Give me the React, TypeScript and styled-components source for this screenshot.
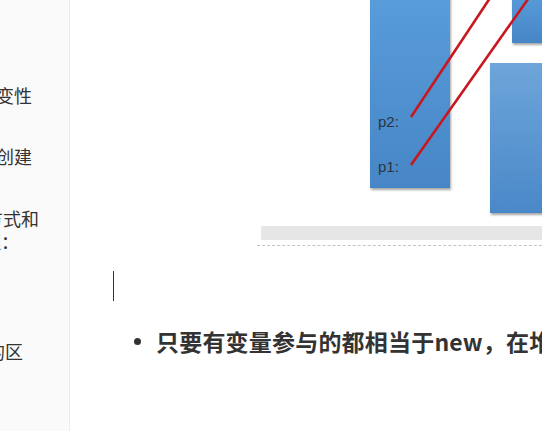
import styled, { createGlobalStyle } from 'styled-components';

const GlobalStyle = createGlobalStyle`
    html, body {
        margin: 0;
        padding: 0;
        background: #ffffff;
        overflow: hidden;
    }
    body {
        font-family: "Noto Sans CJK SC", "Noto Sans", sans-serif;
        color: #333333;
    }
`;

type lineProps = {
    $end: number,
    $top: number,
}

const Page = styled.div`
    display: flex;
    width: 542px;
    height: 431px;
    overflow: hidden;
`;

const Sidebar = styled.aside`
    width: 69px;
    flex-shrink: 0;
    background: #fafafa;
    border-right: 1px solid #ececec;
    overflow: hidden;
    display: flex;
    flex-direction: column;
`;

const OutlineLine = styled.div<lineProps>`
    display: flex;
    justify-content: flex-end;
    width: ${props => props.$end}px;
    margin-top: ${props => props.$top}px;
    height: 23px;
    line-height: 23px;
    font-size: 18px;
    color: #333333;
    white-space: nowrap;
    & span {
        flex-shrink: 0;
    }
`;

const Main = styled.main`
    flex: 1;
    display: flex;
    flex-direction: column;
    overflow: hidden;
`;

const Figure = styled.div`
    margin-left: 187px;
    width: 300px;
    border-bottom: 1px dashed #c4c4c4;
    padding-bottom: 5px;
`;

const Drawing = styled.svg`
    display: block;
`;

const ScrollTrack = styled.div`
    margin-left: 4px;
    height: 14px;
    background: #e6e6e6;
`;

const EmptyParagraph = styled.div`
    margin: 25px 0 0 43px;
    height: 30px;
    border-left: 1px solid #333333;
`;

const List = styled.ul`
    list-style: none;
    margin: 24px 0 0 0;
    padding: 0 0 0 59px;
`;

const ListItem = styled.li`
    position: relative;
    padding-left: 27px;
    font-size: 23px;
    font-weight: 700;
    line-height: 32px;
    letter-spacing: 0.2px;
    white-space: nowrap;
    color: #333333;
    &::before {
        content: '';
        position: absolute;
        left: 5px;
        top: 13px;
        width: 7px;
        height: 7px;
        border-radius: 50%;
        background: #333333;
    }
`;

const outline = [
    { text: '1. String的不可变性', end: 32, top: 84 },
    { text: '2. String对象的创建', end: 32, top: 38 },
    { text: '3. 字符串常量拼接方式和', end: 39, top: 39 },
    { text: '原理：', end: 19, top: 0 },
    { text: '4. ==和equals的区', end: 23, top: 87 },
];

function MemoryDiagram() {
    return (
        <Drawing width="300" height="226" viewBox="0 0 300 226">
            <defs>
                <linearGradient id="barBlue" x1="0" y1="0" x2="0" y2="1">
                    <stop offset="0" stopColor="#5a9ddb" />
                    <stop offset="1" stopColor="#4786c6" />
                </linearGradient>
                <linearGradient id="boxBlue" x1="0" y1="0" x2="0" y2="1">
                    <stop offset="0" stopColor="#6ea5da" />
                    <stop offset="1" stopColor="#4a88c8" />
                </linearGradient>
                <filter id="shade" x="-10%" y="-10%" width="130%" height="130%">
                    <feDropShadow dx="1" dy="2" stdDeviation="1.2" floodColor="#000" floodOpacity="0.35" />
                </filter>
            </defs>
            <rect x="113" y="-10" width="80" height="198" fill="url(#barBlue)" filter="url(#shade)" />
            <rect x="255" y="-10" width="60" height="53" fill="url(#barBlue)" filter="url(#shade)" />
            <rect x="233" y="63" width="80" height="150" fill="url(#boxBlue)" filter="url(#shade)" />
            <text x="121" y="127" fontSize="15" fill="#2a3440" fontFamily="Liberation Sans, sans-serif">p2:</text>
            <text x="121" y="172" fontSize="15" fill="#2a3440" fontFamily="Liberation Sans, sans-serif">p1:</text>
            <line x1="154" y1="117" x2="237" y2="-8" stroke="#c8171f" strokeWidth="2.6" />
            <line x1="154" y1="165" x2="276" y2="-8" stroke="#c8171f" strokeWidth="2.6" />
        </Drawing>
    );
}

export default function App() {
    return (
        <>
            <GlobalStyle />
            <Page>
                <Sidebar>
                    {outline.map((line, i) => (
                        <OutlineLine key={i} $end={line.end} $top={line.top}>
                            <span>{line.text}</span>
                        </OutlineLine>
                    ))}
                </Sidebar>
                <Main>
                    <Figure>
                        <MemoryDiagram />
                        <ScrollTrack />
                    </Figure>
                    <EmptyParagraph />
                    <List>
                        <ListItem>只要有变量参与的都相当于new，在堆中开辟空间</ListItem>
                    </List>
                </Main>
            </Page>
        </>
    );
};
